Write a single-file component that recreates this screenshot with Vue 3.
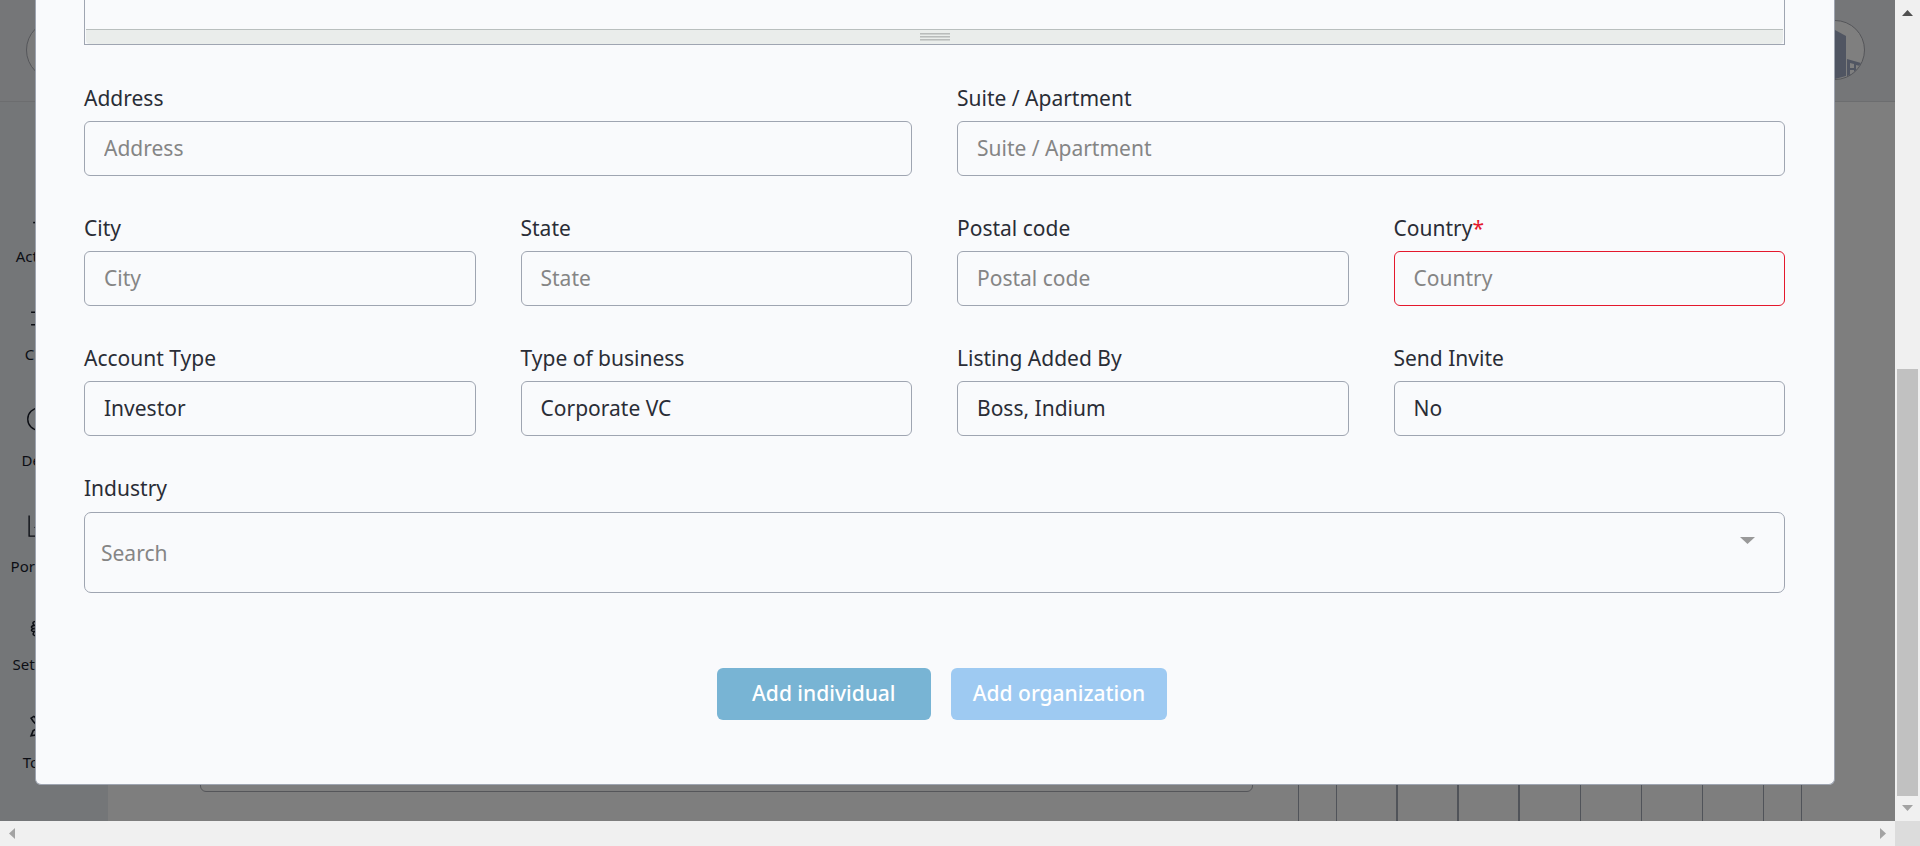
<script setup>
const navItems = [
  { label: 'Activity', size: 'small', path: 'M4 14h15' },
  { label: 'CRM', size: 'small', path: 'M2 6h19M6 12h15M2 18h19' },
  { label: 'Deals', size: 'large', path: 'M10 3a8 8 0 1 0 0 16a8 8 0 1 0 0-16' },
  { label: 'Portfolio', size: 'large', path: 'M3 4v15h18M7 13l4-4l4 3l5-6' },
  {
    label: 'Settings',
    size: 'small',
    path: 'M8 5C3 5 3 7 5 9C1 10 2 12 5 12C1 13 2 15 5 15C3 18 4 19 8 19M12 5C20 4 18 8 20 10C22 12 20 14 19 16C18 20 14 19 12 19M6 12a5 4 0 1 0 10 0a5 4 0 1 0-10 0',
  },
  {
    label: 'Tools',
    size: 'small',
    path: 'M5 2L2 4L4 7L17 21L21 18L7 5L5 2M10 13L4 16L2 21L8 20L11 16M14 10L20 5L17 2L12 7',
  },
]

const rows = [
  [
    { id: 'address', label: 'Address', placeholder: 'Address', wide: true },
    { id: 'suite', label: 'Suite / Apartment', placeholder: 'Suite / Apartment', wide: true },
  ],
  [
    { id: 'city', label: 'City', placeholder: 'City' },
    { id: 'state', label: 'State', placeholder: 'State' },
    { id: 'postal', label: 'Postal code', placeholder: 'Postal code' },
    { id: 'country', label: 'Country', placeholder: 'Country', required: true },
  ],
  [
    { id: 'account', label: 'Account Type', value: 'Investor' },
    { id: 'business', label: 'Type of business', value: 'Corporate VC' },
    { id: 'added-by', label: 'Listing Added By', value: 'Boss, Indium' },
    { id: 'invite', label: 'Send Invite', value: 'No' },
  ],
]
const fields = rows.flat()
</script>

<template>
  <div class="window">
    <div class="viewport">
      <div class="backdrop">
        <header class="topbar">
          <span class="logo"></span>
          <svg class="avatar" viewBox="0 0 60 60" aria-hidden="true">
            <defs><clipPath id="disc"><circle cx="30" cy="30" r="29" /></clipPath></defs>
            <circle cx="30" cy="30" r="29.5" fill="#7f7f7f" stroke="#55565a" />
            <g clip-path="url(#disc)">
              <path d="M18 18L30 10L41 16V56L30 59L18 56Z" fill="#505562" />
              <path d="M42 39L56 43V60H42Z" fill="#505562" />
              <path d="M45 43l4 1v4h-4zM51 45l4 1v3h-4zM45 50l4 0v4h-4zM51 51h4v4h-4z" fill="#7f7f7f" />
            </g>
          </svg>
        </header>
        <div class="page">
          <nav class="sidebar">
            <a v-for="item in navItems" :key="item.label" href="#" class="nav-item">
              <svg :class="['nav-icon', item.size]" viewBox="0 0 24 24" aria-hidden="true">
                <path :d="item.path" />
              </svg>
              <span>{{ item.label }}</span>
            </a>
          </nav>
          <div class="canvas">
            <div class="panel"></div>
            <div class="columns">
              <i v-for="n in 9" :key="n" :class="['col', 'col-' + n]"></i>
            </div>
          </div>
        </div>
      </div>

      <form class="modal" @submit.prevent>
        <div class="editor">
          <div class="editor-body"></div>
          <div class="resizer"><span class="grip"></span></div>
        </div>
        <div class="grid">
          <div v-for="f in fields" :key="f.id" :class="['field', { wide: f.wide }]">
            <label :for="f.id">{{ f.label }}<span v-if="f.required" class="star">*</span></label>
            <input
              :id="f.id"
              type="text"
              :class="['control', { invalid: f.required }]"
              :placeholder="f.placeholder"
              :value="f.value"
            />
          </div>
          <div class="field full">
            <label for="industry">Industry</label>
            <div class="combo">
              <input id="industry" type="text" role="combobox" aria-expanded="false" placeholder="Search" />
              <svg class="caret" viewBox="0 0 15 7" aria-hidden="true"><path d="M0 0H15L7.500 7Z" /></svg>
            </div>
          </div>
        </div>
        <div class="actions">
          <button type="button" class="btn primary">Add individual</button>
          <button type="button" class="btn secondary">Add organization</button>
        </div>
      </form>
    </div>

    <div class="bar-v">
      <svg class="arrow dark" viewBox="0 0 11 6"><path d="M0 6L5.500 0L11 6Z" /></svg>
      <div class="thumb"></div>
      <svg class="arrow" viewBox="0 0 11 6"><path d="M0 0H11L5.500 6Z" /></svg>
    </div>
    <div class="bar-h">
      <svg class="arrow side" viewBox="0 0 6 11"><path d="M6 0V11L0 5.500Z" /></svg>
      <svg class="arrow side" viewBox="0 0 6 11"><path d="M0 0V11L6 5.500Z" /></svg>
    </div>
    <div class="corner"></div>
  </div>
</template>

<style>
body {
  margin: 0;
  overflow: hidden;
}
</style>

<style scoped>
.window {
  display: grid;
  grid-template: minmax(0, 1fr) 25px / minmax(0, 1fr) 25px;
  height: 100vh;
  font-family: "Noto Sans", sans-serif;
  color: #2a2d36;
}
.window * {
  box-sizing: border-box;
}
.viewport {
  position: relative;
  overflow: hidden;
}
.backdrop {
  display: flex;
  flex-direction: column;
  height: 100%;
  background: #7e7e7e;
}
.topbar {
  display: flex;
  justify-content: space-between;
  align-items: flex-start;
  height: 102px;
  padding: 20px 30px 0 26px;
  background: #757678;
  border-bottom: 1px solid #6c6d6f;
}
.logo {
  width: 60px;
  height: 60px;
  border: 1px solid #55565a;
  border-radius: 50%;
  background: #7b7b7b;
}
.avatar {
  width: 60px;
  height: 60px;
}
.page {
  display: flex;
  flex: 1;
  min-height: 0;
}
.sidebar {
  display: flex;
  flex-direction: column;
  gap: 40px;
  width: 108px;
  padding: 106px 26px 0 0;
  background: #747678;
}
.nav-item {
  display: flex;
  flex-direction: column;
  align-items: center;
  gap: 13px;
  color: #0c0e14;
  font-size: 15px;
  line-height: 20px;
  text-decoration: none;
}
.nav-icon {
  fill: none;
  stroke: currentColor;
  stroke-width: 1.5;
  overflow: visible;
}
.small {
  width: 25px;
  height: 25px;
}
.large {
  width: 33px;
  height: 33px;
  stroke-width: 1;
}
.canvas {
  display: flex;
  flex: 1;
  align-items: flex-start;
  padding: 0 93px 0 92px;
}
.panel {
  flex: 1;
  height: 690px;
  border: 1px solid #55565a;
  border-radius: 6px;
}
.columns {
  display: flex;
  align-self: stretch;
  margin-left: 45px;
  border-left: 1px solid #505359;
}
.col {
  width: 61px;
  border-right: 1px solid #505359;
}
.col-1,
.col-9 {
  width: 38px;
}
.col-2,
.col-3,
.col-4 {
  border-right-width: 2px;
}
.modal {
  position: absolute;
  top: 0;
  left: 35px;
  right: 60px;
  padding: 0 49px 64px 48px;
  background: #f9fafc;
  border: 1px solid #9fa5b1;
  border-top: 0;
  border-radius: 0 0 6px 6px;
}
.editor {
  margin-bottom: 38px;
  padding: 0 1px;
  border: 1px solid #9fa5b1;
  border-top: 0;
}
.editor-body {
  height: 29px;
}
.resizer {
  display: flex;
  justify-content: center;
  align-items: center;
  height: 15px;
  background: #eaedeb;
  border-top: 1px solid #b9bfbe;
  border-radius: 0 0 4px 4px;
}
.grip {
  width: 30px;
  height: 8px;
  background: repeating-linear-gradient(#b9bcbb 0 1px, #cfd2d0 1px 2px, #eaedeb 2px 3px);
}
.grid {
  display: grid;
  grid-template-columns: repeat(4, minmax(0, 1fr));
  gap: 37px 45px;
}
.field {
  display: flex;
  flex-direction: column;
  gap: 8px;
}
.wide {
  grid-column: span 2;
}
.full {
  grid-column: 1 / -1;
  gap: 9px;
}
label {
  font-size: 21px;
  line-height: 30px;
}
.star {
  color: #e4182d;
}
input {
  min-width: 0;
  font: inherit;
  font-size: 21px;
  color: inherit;
  background: transparent;
  outline: none;
}
input::placeholder {
  color: #858585;
  opacity: 1;
}
.control {
  height: 55px;
  padding: 0 19px 1px;
  border: 1px solid #9fa5b1;
  border-radius: 6px;
}
.invalid {
  border-color: #e4182d;
}
.combo {
  display: flex;
  align-items: flex-start;
  height: 81px;
  padding-right: 29px;
  border: 1px solid #9fa5b1;
  border-radius: 7px;
}
.combo input {
  flex: 1;
  height: 100%;
  padding: 0 16px;
  border: 0;
}
.caret {
  width: 15px;
  height: 7px;
  margin-top: 24px;
  fill: #999;
}
.actions {
  display: flex;
  justify-content: center;
  gap: 20px;
  padding: 75px 0 0 15px;
}
.btn {
  height: 52px;
  min-width: 214px;
  padding: 0 22px 2px;
  border: 0;
  border-radius: 6px;
  color: #fff;
  font: inherit;
  font-size: 21px;
  font-weight: 500;
}
.primary {
  background: #78b4d4;
}
.secondary {
  background: #9ecaf2;
}
.bar-v {
  display: flex;
  flex-direction: column;
  align-items: center;
  padding: 10px 0;
  background: #f0f0f0;
}
.arrow {
  width: 11px;
  height: 6px;
  fill: #a3a3a3;
}
.dark {
  fill: #505050;
}
.thumb {
  width: 21px;
  height: 427px;
  margin: auto 0 9px;
  background: #c1c1c1;
}
.bar-h {
  display: flex;
  justify-content: space-between;
  align-items: center;
  padding: 0 9px;
  background: #f0f0f0;
}
.side {
  width: 6px;
  height: 11px;
}
.corner {
  background: #dcdcdc;
}
</style>
